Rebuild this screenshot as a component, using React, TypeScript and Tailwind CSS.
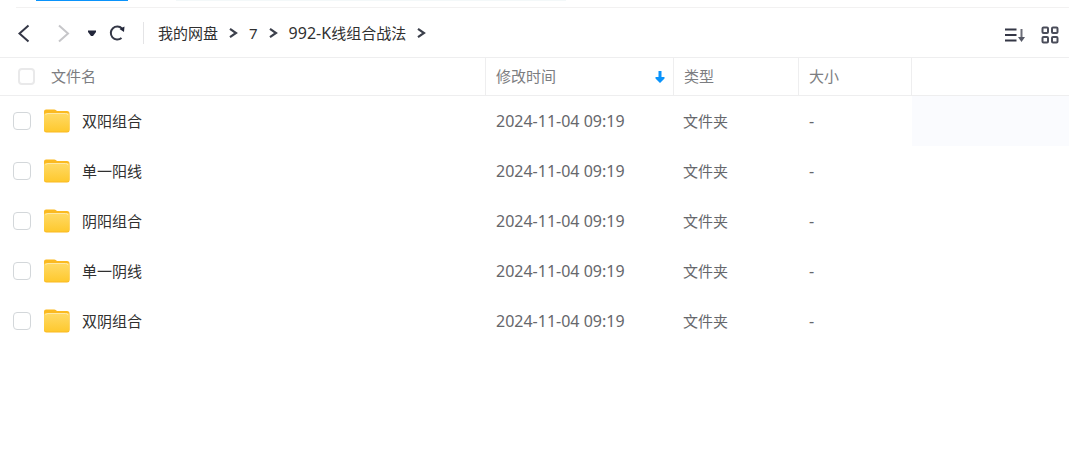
import { useState } from "react";

interface IFile {
  id: number;
  name: string;
  time: string;
  type: string;
  size: string;
}

const files: IFile[] = [
  { id: 1, name: "双阳组合", time: "2024-11-04 09:19", type: "文件夹", size: "-" },
  { id: 2, name: "单一阳线", time: "2024-11-04 09:19", type: "文件夹", size: "-" },
  { id: 3, name: "阴阳组合", time: "2024-11-04 09:19", type: "文件夹", size: "-" },
  { id: 4, name: "单一阴线", time: "2024-11-04 09:19", type: "文件夹", size: "-" },
  { id: 5, name: "双阴组合", time: "2024-11-04 09:19", type: "文件夹", size: "-" },
];

const FolderIcon = () => (
  <svg width="26" height="24" viewBox="0 0 26 24" className="shrink-0">
    <defs>
      <linearGradient id="folder" x1="0" y1="0" x2="0" y2="1">
        <stop offset="0" stopColor="#ffda66" />
        <stop offset="1" stopColor="#fec92f" />
      </linearGradient>
    </defs>
    <path
      d="M2 .5h8.200c.8 0 1.300.2 1.900.7l.9.800H23a2.500 2.500 0 0 1 2.500 2.500V21a2.500 2.500 0 0 1-2.500 2.500H2.500A2.500 2.500 0 0 1 0 21V2.500a2 2 0 0 1 2-2z"
      fill="#fbba20"
    />
    <rect x="0" y="4" width="25.500" height="18.500" rx="2.500" fill="url(#folder)" />
    <path d="M1.500 6Q2 4.500 4 4.500h17.500q2 0 2.500 1.500" stroke="#ffe9a3" fill="none" />
  </svg>
);

const Chevron = () => (
  <svg width="9" height="12" viewBox="0 0 9 12" fill="none" aria-hidden="true">
    <path d="M1 1.800 7 6 1 10.200" stroke="#3c404c" strokeWidth="2.200" />
  </svg>
);

const Toolbar = () => (
  <div className="flex h-[50px] items-center border-b border-[#eeeeef] pr-2.5 pl-4">
    <button aria-label="后退" className="w-10">
      <svg width="16" height="20" viewBox="0 0 16 20" fill="none">
        <path d="M12.500 2.500 3.500 10.500l9 8" stroke="#343746" strokeWidth="2" />
      </svg>
    </button>
    <button aria-label="前进" disabled className="w-8">
      <svg width="16" height="20" viewBox="0 0 16 20" fill="none">
        <path d="m3 2.500 9 8-9 8" stroke="#c6c6c9" strokeWidth="2" />
      </svg>
    </button>
    <button aria-label="历史记录" className="w-5">
      <svg width="8" height="8" viewBox="0 0 8 8">
        <path d="M0 1.500h8V3L5 7H3L0 3z" fill="#22263a" />
      </svg>
    </button>
    <button aria-label="刷新" className="w-[35px]">
      <svg width="18" height="18" viewBox="0 0 18 18" fill="none">
        <path d="M13.500 14A6.500 6.500 0 1 1 14 4.500" stroke="#343746" strokeWidth="2" />
        <path d="M11.500 5 16.500 2.500 16 8z" fill="#22263a" />
      </svg>
    </button>
    <nav className="flex h-[22px] items-center gap-[11px] border-l border-[#e4e4e6] pl-3.5 leading-6 text-[#303030]">
      <a href="#disk">我的网盘</a>
      <Chevron />
      <a href="#7">7</a>
      <Chevron />
      <a href="#992">
        <span className="text-base leading-none">992-K</span>线组合战法
      </a>
      <Chevron />
    </nav>
    <div className="mt-1 ml-auto flex items-center gap-4">
      <button aria-label="排序">
        <svg width="20" height="18" viewBox="0 0 20 18" fill="none">
          <path d="M0 3.500h11.500M0 9h11.500M0 14.500h11.500" stroke="#343746" strokeWidth="2" />
          <path d="M16.500 3v9" stroke="#6c6e79" strokeWidth="2" />
          <path d="M13 11h7l-3.500 5z" fill="#555865" />
        </svg>
      </button>
      <button aria-label="网格视图">
        <svg width="18" height="18" viewBox="0 0 18 18" fill="none" stroke="#4a4d5a" strokeWidth="2">
          <rect x="1.500" y="1.500" width="5.500" height="5.500" rx="1" />
          <rect x="11" y="1.500" width="5.500" height="5.500" rx="1" />
          <rect x="1.500" y="11" width="5.500" height="5.500" rx="1" />
          <rect x="11" y="11" width="5.500" height="5.500" rx="1" />
        </svg>
      </button>
    </div>
  </div>
);

const App = () => {
  const [selected, setSelected] = useState<number[]>([]);

  const toggle = (id: number) =>
    setSelected((prev) =>
      prev.includes(id) ? prev.filter((item) => item !== id) : [...prev, id]
    );

  const toggleAll = () =>
    setSelected(selected.length === files.length ? [] : files.map((file) => file.id));

  return (
    <div className="min-h-screen bg-white font-['Noto_Sans','Noto_Sans_CJK_SC',sans-serif] text-[15px]">
      <div className="ml-4 flex h-2 items-start border-b border-[#f2f1f1] pl-5">
        <div className="h-px w-[92px] bg-[#0a93fb]" />
        <div className="ml-12 h-px w-[390px] bg-[#f3f8f9]" />
      </div>
      <Toolbar />
      <table className="w-full table-fixed border-separate border-spacing-0 text-left">
        <colgroup>
          <col className="w-[486px]" />
          <col className="w-[188px]" />
          <col className="w-[125px]" />
          <col className="w-[113px]" />
          <col />
        </colgroup>
        <thead>
          <tr className="h-[38px] text-[#7c7d81] *:border-b *:border-[#eeeeef] *:font-normal">
            <th className="border-r">
              <div className="flex items-center gap-4 pl-[18px]">
                <input
                  type="checkbox"
                  aria-label="全选"
                  checked={selected.length === files.length}
                  onChange={toggleAll}
                  className="size-[17px] appearance-none rounded border-2 border-[#e9e9ea] checked:bg-[#0a93fb]"
                />
                文件名
              </div>
            </th>
            <th className="border-r">
              <button className="flex w-full items-center justify-between pr-2 pl-2.5">
                修改时间
                <svg width="10" height="14" viewBox="0 0 10 14">
                  <path d="M3.500 1h3v6H9.500v1.500L5 13 .5 8.500V7h3z" fill="#0a93fb" />
                </svg>
              </button>
            </th>
            <th className="border-r pl-2.5">类型</th>
            <th className="border-r pl-2.5">大小</th>
            <th />
          </tr>
        </thead>
        <tbody>
          {files.map((file, index) => (
            <tr key={file.id} className="h-[50px] text-[#66676b]">
              <td>
                <label className="flex items-center pl-[13px] text-[#303030]">
                  <input
                    type="checkbox"
                    checked={selected.includes(file.id)}
                    onChange={() => toggle(file.id)}
                    className="mr-[13px] size-[18px] appearance-none rounded border border-[#d3d7da] checked:bg-[#0a93fb]"
                  />
                  <FolderIcon />
                  <span className="ml-3">{file.name}</span>
                </label>
              </td>
              <td className="pl-2.5 text-base">{file.time}</td>
              <td className="pl-[9px]">{file.type}</td>
              <td className="pl-2.5 text-base">{file.size}</td>
              <td className={index === 0 ? "bg-[#fafbfe]" : ""} />
            </tr>
          ))}
        </tbody>
      </table>
    </div>
  );
};

export default App;
